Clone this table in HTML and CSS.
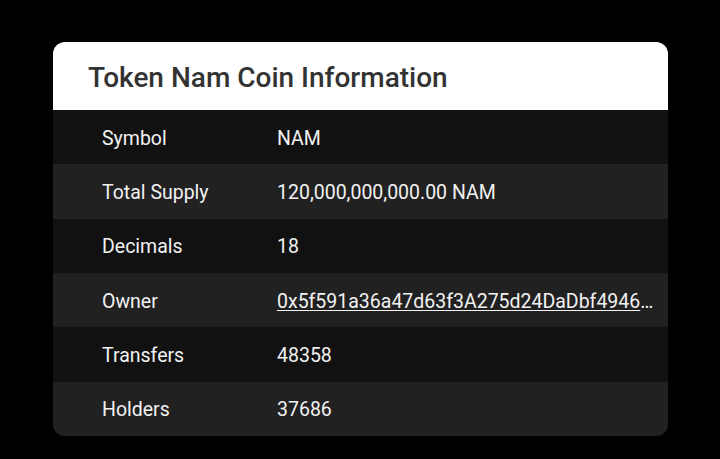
FILE: index.html
```html
<!DOCTYPE html>
<html>
<head>
<meta charset="utf-8">
<link rel="stylesheet" href="styles.css">
</head>
<body>
<div class="card">
  <div class="card-header"><h1 class="title">Token Nam Coin Information</h1></div>
  <div class="rows">
    <div class="row"><span class="label">Symbol</span><span class="value">NAM</span></div>
    <div class="row alt"><span class="label">Total Supply</span><span class="value">120,000,000,000.00 NAM</span></div>
    <div class="row"><span class="label">Decimals</span><span class="value">18</span></div>
    <div class="row alt"><span class="label">Owner</span><a class="value link" href="#">0x5f591a36a47d63f3A275d24DaDbf4946</a><span class="ellipsis">…</span></div>
    <div class="row"><span class="label">Transfers</span><span class="value">48358</span></div>
    <div class="row alt"><span class="label">Holders</span><span class="value">37686</span></div>
  </div>
</div>
</body>
</html>
```

FILE: styles.css
```css
html, body {
  margin: 0;
  padding: 0;
  background: #000;
  height: 100%;
}
body {
  font-family: Roboto, "Liberation Sans", sans-serif;
  padding: 42px 52px 0 53px;
  box-sizing: border-box;
}
.card {
  border-radius: 12px;
  overflow: hidden;
  background: #111;
}
.card-header {
  background: #fff;
  height: 68px;
  display: flex;
  align-items: center;
  padding-left: 35px;
  padding-top: 3px;
  box-sizing: border-box;
}
.title {
  margin: 0;
  font-size: 28px;
  font-weight: 500;
  color: #333;
}
.row {
  height: 54.33px;
  display: flex;
  align-items: center;
  padding: 2px 13px 0 49px;
  box-sizing: border-box;
  background: #111;
  color: #f2f2f2;
  font-size: 19.5px;
}
.row.alt {
  background: #212121;
}
.label {
  width: 175px;
  flex: none;
}
.value {
  white-space: nowrap;
}
.link {
  color: #f2f2f2;
  text-decoration: underline;
  text-underline-offset: 2px;
}
```
